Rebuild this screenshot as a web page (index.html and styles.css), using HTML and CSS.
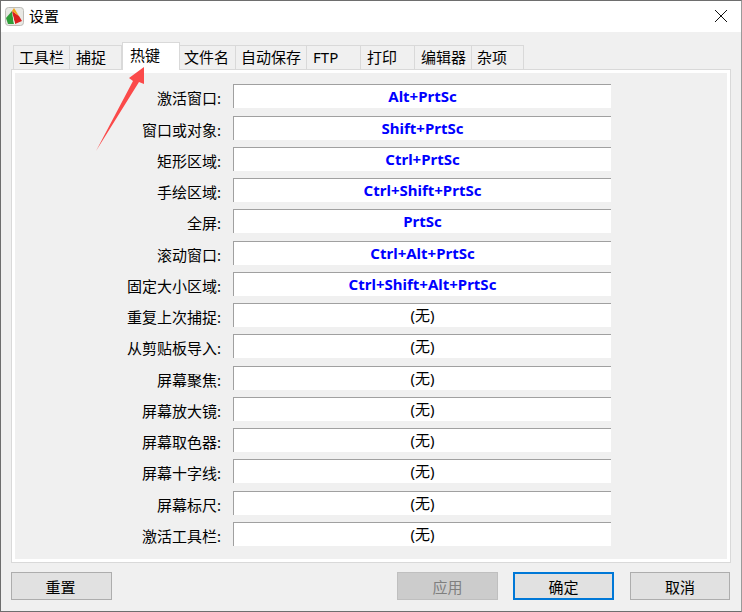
FILE: index.html
```html
<!DOCTYPE html>
<html lang="zh">
<head>
<meta charset="utf-8">
<title>设置</title>
<link rel="stylesheet" href="styles.css">
</head>
<body>
<div class="window">
  <header class="titlebar">
    <svg class="app-icon" width="20" height="20" viewBox="0 0 20 20">
      <rect x="0.5" y="0.5" width="18" height="18" rx="3" fill="#e8e8e4" stroke="#bdbdb8"/>
      <path d="M7 4 L1 11 L3 17 L9 17 Z" fill="#2f9e3a"/>
      <path d="M7 4 L10 17 L17 14 L14 9 Z" fill="#d9201f"/>
      <path d="M7 4 L9 1 L14 9 Z" fill="#f2a51e"/>
      <path d="M7 5 L9 17 L10 17 Z" fill="#ffffff"/>
    </svg>
    <span class="title">设置</span>
    <svg class="close" width="14" height="14" viewBox="0 0 14 14">
      <path d="M1 1 L13 13 M13 1 L1 13" stroke="#111" stroke-width="1" fill="none"/>
    </svg>
  </header>
  <div class="content">
    <nav class="tabs">
      <span class="tab t1">工具栏</span>
      <span class="tab t2">捕捉</span>
      <span class="tab t3 active">热键</span>
      <span class="tab t4">文件名</span>
      <span class="tab t5">自动保存</span>
      <span class="tab t6">FTP</span>
      <span class="tab t7">打印</span>
      <span class="tab t8">编辑器</span>
      <span class="tab t9">杂项</span>
    </nav>
    <section class="panel">
      <div class="row"><label>激活窗口:</label><div class="field hot">Alt+PrtSc</div></div>
      <div class="row"><label>窗口或对象:</label><div class="field hot">Shift+PrtSc</div></div>
      <div class="row"><label>矩形区域:</label><div class="field hot">Ctrl+PrtSc</div></div>
      <div class="row"><label>手绘区域:</label><div class="field hot">Ctrl+Shift+PrtSc</div></div>
      <div class="row"><label>全屏:</label><div class="field hot">PrtSc</div></div>
      <div class="row"><label>滚动窗口:</label><div class="field hot">Ctrl+Alt+PrtSc</div></div>
      <div class="row"><label>固定大小区域:</label><div class="field hot">Ctrl+Shift+Alt+PrtSc</div></div>
      <div class="row"><label>重复上次捕捉:</label><div class="field">(无)</div></div>
      <div class="row"><label>从剪贴板导入:</label><div class="field">(无)</div></div>
      <div class="row"><label>屏幕聚焦:</label><div class="field">(无)</div></div>
      <div class="row"><label>屏幕放大镜:</label><div class="field">(无)</div></div>
      <div class="row"><label>屏幕取色器:</label><div class="field">(无)</div></div>
      <div class="row"><label>屏幕十字线:</label><div class="field">(无)</div></div>
      <div class="row"><label>屏幕标尺:</label><div class="field">(无)</div></div>
      <div class="row"><label>激活工具栏:</label><div class="field">(无)</div></div>
    </section>
    <footer class="buttons">
      <button class="btn first">重置</button>
      <span class="spacer"></span>
      <button class="btn disabled">应用</button>
      <button class="btn primary">确定</button>
      <button class="btn last">取消</button>
    </footer>
  </div>
  <svg class="arrow" width="60" height="90" viewBox="0 0 60 90">
    <polygon points="0,85 37,15 33,12 48,1 48,18 43,16" fill="#fb4a4a"/>
  </svg>
</div>
</body>
</html>
```

FILE: styles.css
```css
* { box-sizing: border-box; }
html, body { margin: 0; padding: 0; }
body {
  width: 742px;
  height: 612px;
  font-family: "Noto Sans", "Noto Sans CJK SC", sans-serif;
  font-size: 15px;
  color: #000;
  overflow: hidden;
}
.window {
  position: relative;
  width: 742px;
  height: 612px;
  background: #f0f0f0;
  border: 1px solid #6e6e6e;
  border-right-color: #9a9a9a;
  display: flex;
  flex-direction: column;
}
.titlebar {
  height: 31px;
  background: #fff;
  display: flex;
  align-items: center;
  padding-left: 4px;
  flex: none;
}
.app-icon { flex: none; margin-top: 1px; }
.title { margin-left: 4px; line-height: 20px; margin-top: -1px; }
.close { margin-left: auto; margin-right: 13px; margin-top: -1px; }
.content {
  flex: 1;
  display: flex;
  flex-direction: column;
  padding: 10px 10px 0 10px;
}
.tabs {
  display: flex;
  height: 28px;
  padding-left: 2px;
  align-items: flex-end;
  position: relative;
  z-index: 1;
  margin-bottom: -1px;
}
.tab {
  flex: none;
  height: 25px;
  background: #f0f0f0;
  border: 1px solid #d9d9d9;
  border-left: 0;
  padding-left: 5px;
  line-height: 23px;
  white-space: nowrap;
  overflow: hidden;
}
.t1 { width: 57px; border-left: 1px solid #d9d9d9; }
.t2 { width: 52px; padding-left: 6px; }
.t3 { width: 58px; }
.t4 { width: 56px; padding-left: 4px; }
.t5 { width: 71px; }
.t6 { width: 54px; padding-left: 6px; }
.t7 { width: 54px; padding-left: 6px; }
.t8 { width: 57px; padding-left: 6px; }
.t9 { width: 52px; padding-left: 5px; }
.tab.active {
  height: 28px;
  background: #fff;
  border-bottom: 0;
  border-left: 1px solid #d9d9d9;
  line-height: 24px;
  padding-left: 7px;
}
.panel {
  flex: none;
  width: 720px;
  height: 494px;
  border: 1px solid #d9d9d9;
  box-shadow: inset 0 0 0 3px #fff;
  background: #f0f0f0;
  padding: 14.4px 0 0 0;
  display: flex;
  flex-direction: column;
  gap: 7.25px;
}
.row {
  display: flex;
  height: 24px;
  flex: none;
}
.row label {
  width: 209px;
  text-align: right;
  line-height: 28px;
  flex: none;
  white-space: nowrap;
}
.field {
  margin-left: 12px;
  width: 378px;
  height: 24px;
  background: #fff;
  border-top: 1px solid #a0a0a0;
  border-left: 1px solid #a0a0a0;
  text-align: center;
  line-height: 23px;
}
.field.hot {
  color: #0000ff;
  font-weight: 700;
}
.buttons {
  display: flex;
  margin-top: 9px;
  align-items: flex-start;
}
.spacer { width: 270px; flex: none; }
.btn {
  flex: none;
  width: 101px;
  height: 28px;
  padding: 0;
  font: inherit;
  color: #000;
  background: #e1e1e1;
  border: 1px solid #adadad;
  margin: 0 15px 0 0;
}
.btn.first { padding-right: 2px; }
.btn.disabled {
  background: #cccccc;
  border-color: #bfbfbf;
  color: #7f7f7f;
}
.btn.primary {
  border: 2px solid #0078d7;
  margin-right: 16px;
}
.btn.last { width: 100px; margin-right: 0; }
.arrow {
  position: absolute;
  left: 95px;
  top: 65px;
  z-index: 2;
}
```
